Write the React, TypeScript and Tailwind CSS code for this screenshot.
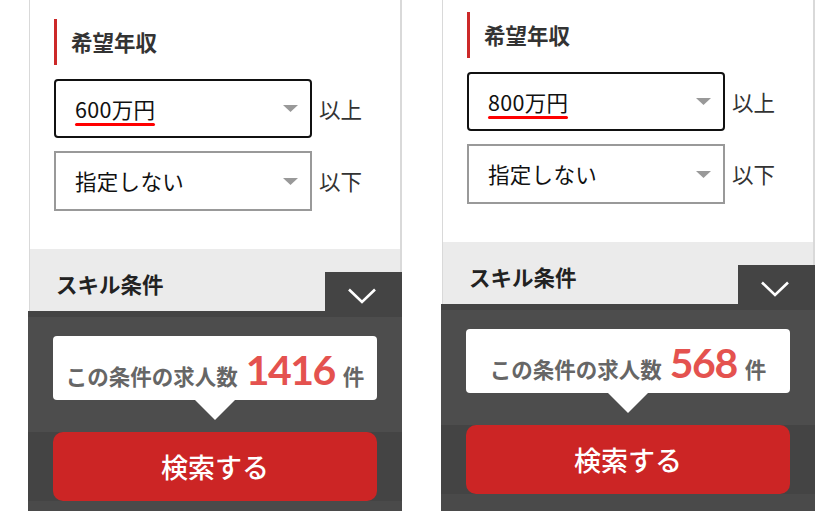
import React from 'react';

const jp = '[font-family:"Noto_Sans_CJK_JP","Noto_Sans",sans-serif]';

interface SelectProps {
  value: string;
  active?: boolean;
  underline?: boolean;
}

const SelectBox: React.FC<SelectProps> = ({ value, active, underline }) => {
  const frame = active
    ? 'h-[59px] border-[#111] rounded-[4px]'
    : 'h-[60px] border-[#999]';
  return (
    <div className={`flex items-center justify-between w-[258px] border-2 bg-white pl-[19px] pr-[12px] ${frame}`}>
      <span className="relative text-[21.5px] tracking-[0.3px] leading-none text-[#111]">
        {value}
        {underline && (
          <span className="absolute left-0 right-0 -bottom-[7px] h-[3px] rounded-full bg-[#ff0000]" />
        )}
      </span>
      <svg width="15" height="7" viewBox="0 0 15 7">
        <polygon points="0,0 15,0 7.5,7" fill="#999" />
      </svg>
    </div>
  );
};

const Panel: React.FC<{ from: string; count: string; className?: string }> = ({ from, count, className = '' }) => {
  return (
    <div className={`flex flex-col w-[374px] ${jp} ${className}`}>
      {/* salary block */}
      <div className="ml-px border-l border-r-2 border-[#d9d9d9] bg-white pl-[24px] pt-[19px] pb-[38px]">
        <div className="flex items-center">
          <div className="w-[3px] h-[46px] bg-[#cc2929]" />
          <span className="ml-[14px] text-[21.5px] font-bold leading-none text-[#333]">希望年収</span>
        </div>
        <div className="mt-[14px] flex items-center">
          <SelectBox value={from} active underline />
          <span className="ml-[7px] text-[21.5px] leading-none text-[#333]">以上</span>
        </div>
        <div className="mt-[13px] flex items-center">
          <SelectBox value="指定しない" />
          <span className="ml-[7px] text-[21.5px] leading-none text-[#333]">以下</span>
        </div>
      </div>

      {/* skill header */}
      <div className="ml-px flex items-end justify-between h-[62px] border-l border-r-2 border-[#d9d9d9] bg-[#ebebeb]">
        <span className="self-start pl-[26px] pt-[24px] text-[21.5px] font-bold leading-none text-[#222]">スキル条件</span>
        <div className="-mr-[2px] w-[77px] h-[39px] bg-[#444]">
          <svg width="77" height="39" viewBox="0 0 77 39">
            <polyline points="24,17.5 37,30 50,17.5" fill="none" stroke="#fff" strokeWidth="2.6" />
          </svg>
        </div>
      </div>

      {/* sticky footer */}
      <div className="bg-[#444] pt-[6px]">
        <div className="bg-[#4d4d4d] px-[25px] pt-[19px] pb-[12px]">
          <div className="flex items-baseline justify-center h-[64px] rounded-[4px] bg-white pt-[13px]">
            <span className="text-[21.5px] font-bold leading-none text-[#666]">この条件の求人数</span>
            <span className="mx-[8px] [font-family:Lato,sans-serif] text-[41px] font-bold leading-none tracking-[-1.5px] text-[#e4524f]">
              {count}
            </span>
            <span className="text-[21.5px] font-bold leading-none text-[#666]">件</span>
          </div>
          <div className="mx-auto w-0 h-0 border-l-[20px] border-r-[20px] border-t-[20px] border-l-transparent border-r-transparent border-t-white" />
        </div>
        <div className="px-[25px]">
          <button className="flex items-center justify-center w-full h-[69px] rounded-[10px] bg-[#cc2525] text-[27px] font-medium leading-none text-white">
            検索する
          </button>
        </div>
        <div className="h-[20px] bg-[#4a4a4a]" />
      </div>
    </div>
  );
}

export default function App() {
  return (
    <div className="w-[839px] h-[511px] overflow-hidden bg-white">
      <div className="flex items-start gap-[39px] pl-[28px]">
        <Panel from="600万円" count="1416" />
        <Panel from="800万円" count="568" className="-mt-[7px]" />
      </div>
    </div>
  );
}
